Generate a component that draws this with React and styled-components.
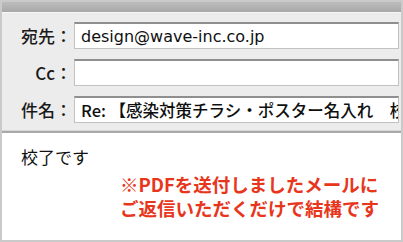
import React from "react";
import styled, { createGlobalStyle } from "styled-components";

const Global = createGlobalStyle`
  html, body { margin: 0; padding: 0; background: #fff; }
  * { box-sizing: border-box; }
`;

const Frame = styled.div`
  width: 403px;
  height: 242px;
  border: 2px solid #cacaca;
  display: flex;
  flex-direction: column;
  background: #fff;
  overflow: hidden;
`;

const Header = styled.div`
  background: #ececec;
  border-bottom: 2px solid #a9a9a9;
  box-shadow: inset 0 -1px 0 #d6d6d6;
  display: flex;
  flex-direction: column;
`;

const TitleBand = styled.div`
  height: 11px;
  background: linear-gradient(#bcbcbc, #a8a8a8);
  border-bottom: 1px solid #f7f7f7;
`;

const Fields = styled.div`
  display: flex;
  flex-direction: column;
  gap: 10px;
  padding: 9px 2px 8px 0;
`;

const Row = styled.div`
  display: flex;
  align-items: center;
  height: 27px;
`;

const Label = styled.div`
  width: 72px;
  padding-right: 2px;
  text-align: right;
  font-family: "Noto Sans CJK JP", sans-serif;
  font-weight: 500;
  font-size: 17px;
  color: #1a1a1a;
  white-space: nowrap;
  flex-shrink: 0;
`;

const Field = styled.div`
  flex: 1;
  height: 27px;
  background: #fff;
  border: 1px solid #c2c2c2;
  border-top: 2px solid #8f8f8f;
  display: flex;
  align-items: center;
  padding-left: 6px;
  overflow: hidden;
  white-space: nowrap;
  color: #0f0f0f;
  font-family: ${(p) => (p.$latin ? `"DejaVu Sans", sans-serif` : `"Noto Sans CJK JP", sans-serif`)};
  font-size: ${(p) => (p.$latin ? "16px" : "16.5px")};
  font-weight: ${(p) => (p.$latin ? 400 : 500)};
`;

const Body = styled.div`
  flex: 1;
  padding: 12px 0 0 19px;
  font-family: "Noto Sans CJK JP", sans-serif;
`;

const Plain = styled.div`
  font-size: 17px;
  color: #111;
  line-height: 24px;
`;

const Note = styled.div`
  margin: 3px 0 0 99px;
  color: #e8361d;
  font-weight: 700;
  font-size: 18.5px;
  line-height: 24px;
  white-space: nowrap;
`;

export default function App() {
  return (
    <>
      <Global />
      <Frame>
        <Header>
          <TitleBand />
          <Fields>
            <Row>
              <Label>宛先：</Label>
              <Field $latin>design@wave-inc.co.jp</Field>
            </Row>
            <Row>
              <Label>Cc：</Label>
              <Field $latin />
            </Row>
            <Row>
              <Label>件名：</Label>
              <Field>Re: 【感染対策チラシ・ポスター名入れ　校</Field>
            </Row>
          </Fields>
        </Header>
        <Body>
          <Plain>校了です</Plain>
          <Note>
            ※PDFを送付しましたメールに
            <br />
            ご返信いただくだけで結構です
          </Note>
        </Body>
      </Frame>
    </>
  );
}
